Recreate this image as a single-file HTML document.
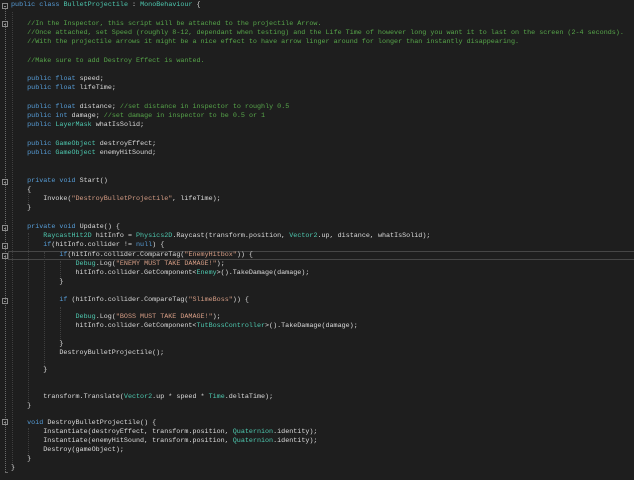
<!DOCTYPE html>
<html><head><style>
html,body{margin:0;padding:0;background:#1e1e1e;width:634px;height:480px;overflow:hidden}
pre{position:absolute;left:11px;margin:0;font-family:"Liberation Mono",monospace;font-size:6.73px;color:#dcdcdc;white-space:pre}
#a{top:1.4px;line-height:9.22px}
#b{top:251.3px;line-height:8.85px}
.k{color:#569cd6}.t{color:#4ec9b0}.c{color:#57a64a}.s{color:#d69d85}
.cur{position:absolute;left:8px;right:0;top:251px;height:7px;border:1px solid #464646;border-right:none}
.fold{position:absolute;left:2px;width:6px;height:6px;border:1px solid #8a8a8a;box-sizing:border-box}
.fold:after{content:"";position:absolute;left:1px;top:2px;width:2px;height:0;border-top:1px solid #8a8a8a}
.gl{position:absolute;left:5px;width:0;border-left:1px dotted #6a6a6a}
.ig{position:absolute;width:0;border-left:1px dotted #3e3e3e}
</style></head><body>
<div class="cur"></div>
<div class="gl" style="top:9px;height:463px"></div>
<div style="position:absolute;left:5px;top:472px;width:3px;border-top:1px solid #6a6a6a"></div>
<div class="fold" style="top:3px"></div>
<div class="fold" style="top:21px"></div>
<div class="fold" style="top:179px"></div>
<div class="fold" style="top:225px"></div>
<div class="fold" style="top:243px"></div>
<div class="fold" style="top:253px"></div>
<div class="fold" style="top:298px"></div>
<div class="fold" style="top:419px"></div>
<div class="ig" style="left:12px;top:12px;height:455px"></div>
<div class="ig" style="left:28px;top:189px;height:14px"></div>
<div class="ig" style="left:28px;top:233px;height:168px"></div>
<div class="ig" style="left:44px;top:252px;height:120px"></div>
<div class="ig" style="left:60px;top:261px;height:20px"></div>
<div class="ig" style="left:60px;top:307px;height:40px"></div>
<div class="ig" style="left:28px;top:428px;height:30px"></div>
<pre id="a"><span class="k">public</span> <span class="k">class</span> <span class="t">BulletProjectile</span> : <span class="t">MonoBehaviour</span> {

    <span class="c">//In the Inspector, this script will be attached to the projectile Arrow.</span>
    <span class="c">//Once attached, set Speed (roughly 8-12, dependant when testing) and the Life Time of however long you want it to last on the screen (2-4 seconds).</span>
    <span class="c">//With the projectile arrows it might be a nice effect to have arrow linger around for longer than instantly disappearing.</span>

    <span class="c">//Make sure to add Destroy Effect is wanted.</span>

    <span class="k">public</span> <span class="k">float</span> speed;
    <span class="k">public</span> <span class="k">float</span> lifeTime;

    <span class="k">public</span> <span class="k">float</span> distance; <span class="c">//set distance in inspector to roughly 0.5</span>
    <span class="k">public</span> <span class="k">int</span> damage; <span class="c">//set damage in inspector to be 0.5 or 1</span>
    <span class="k">public</span> <span class="t">LayerMask</span> whatIsSolid;

    <span class="k">public</span> <span class="t">GameObject</span> destroyEffect;
    <span class="k">public</span> <span class="t">GameObject</span> enemyHitSound;


    <span class="k">private</span> <span class="k">void</span> Start()
    {
        Invoke(<span class="s">"DestroyBulletProjectile"</span>, lifeTime);
    }

    <span class="k">private</span> <span class="k">void</span> Update() {
        <span class="t">RaycastHit2D</span> hitInfo = <span class="t">Physics2D</span>.Raycast(transform.position, <span class="t">Vector2</span>.up, distance, whatIsSolid);
        <span class="k">if</span>(hitInfo.collider != <span class="k">null</span>) {</pre>
<pre id="b">            <span class="k">if</span>(hitInfo.collider.CompareTag(<span class="s">"EnemyHitbox"</span>)) {
                <span class="t">Debug</span>.Log(<span class="s">"ENEMY MUST TAKE DAMAGE!"</span>);
                hitInfo.collider.GetComponent&lt;<span class="t">Enemy</span>&gt;().TakeDamage(damage);
            }

            <span class="k">if</span> (hitInfo.collider.CompareTag(<span class="s">"SlimeBoss"</span>)) {

                <span class="t">Debug</span>.Log(<span class="s">"BOSS MUST TAKE DAMAGE!"</span>);
                hitInfo.collider.GetComponent&lt;<span class="t">TutBossController</span>&gt;().TakeDamage(damage);

            }
            DestroyBulletProjectile();

        }


        transform.Translate(<span class="t">Vector2</span>.up * speed * <span class="t">Time</span>.deltaTime);
    }

    <span class="k">void</span> DestroyBulletProjectile() {
        Instantiate(destroyEffect, transform.position, <span class="t">Quaternion</span>.identity);
        Instantiate(enemyHitSound, transform.position, <span class="t">Quaternion</span>.identity);
        Destroy(gameObject);
    }
}</pre>
</body></html>
